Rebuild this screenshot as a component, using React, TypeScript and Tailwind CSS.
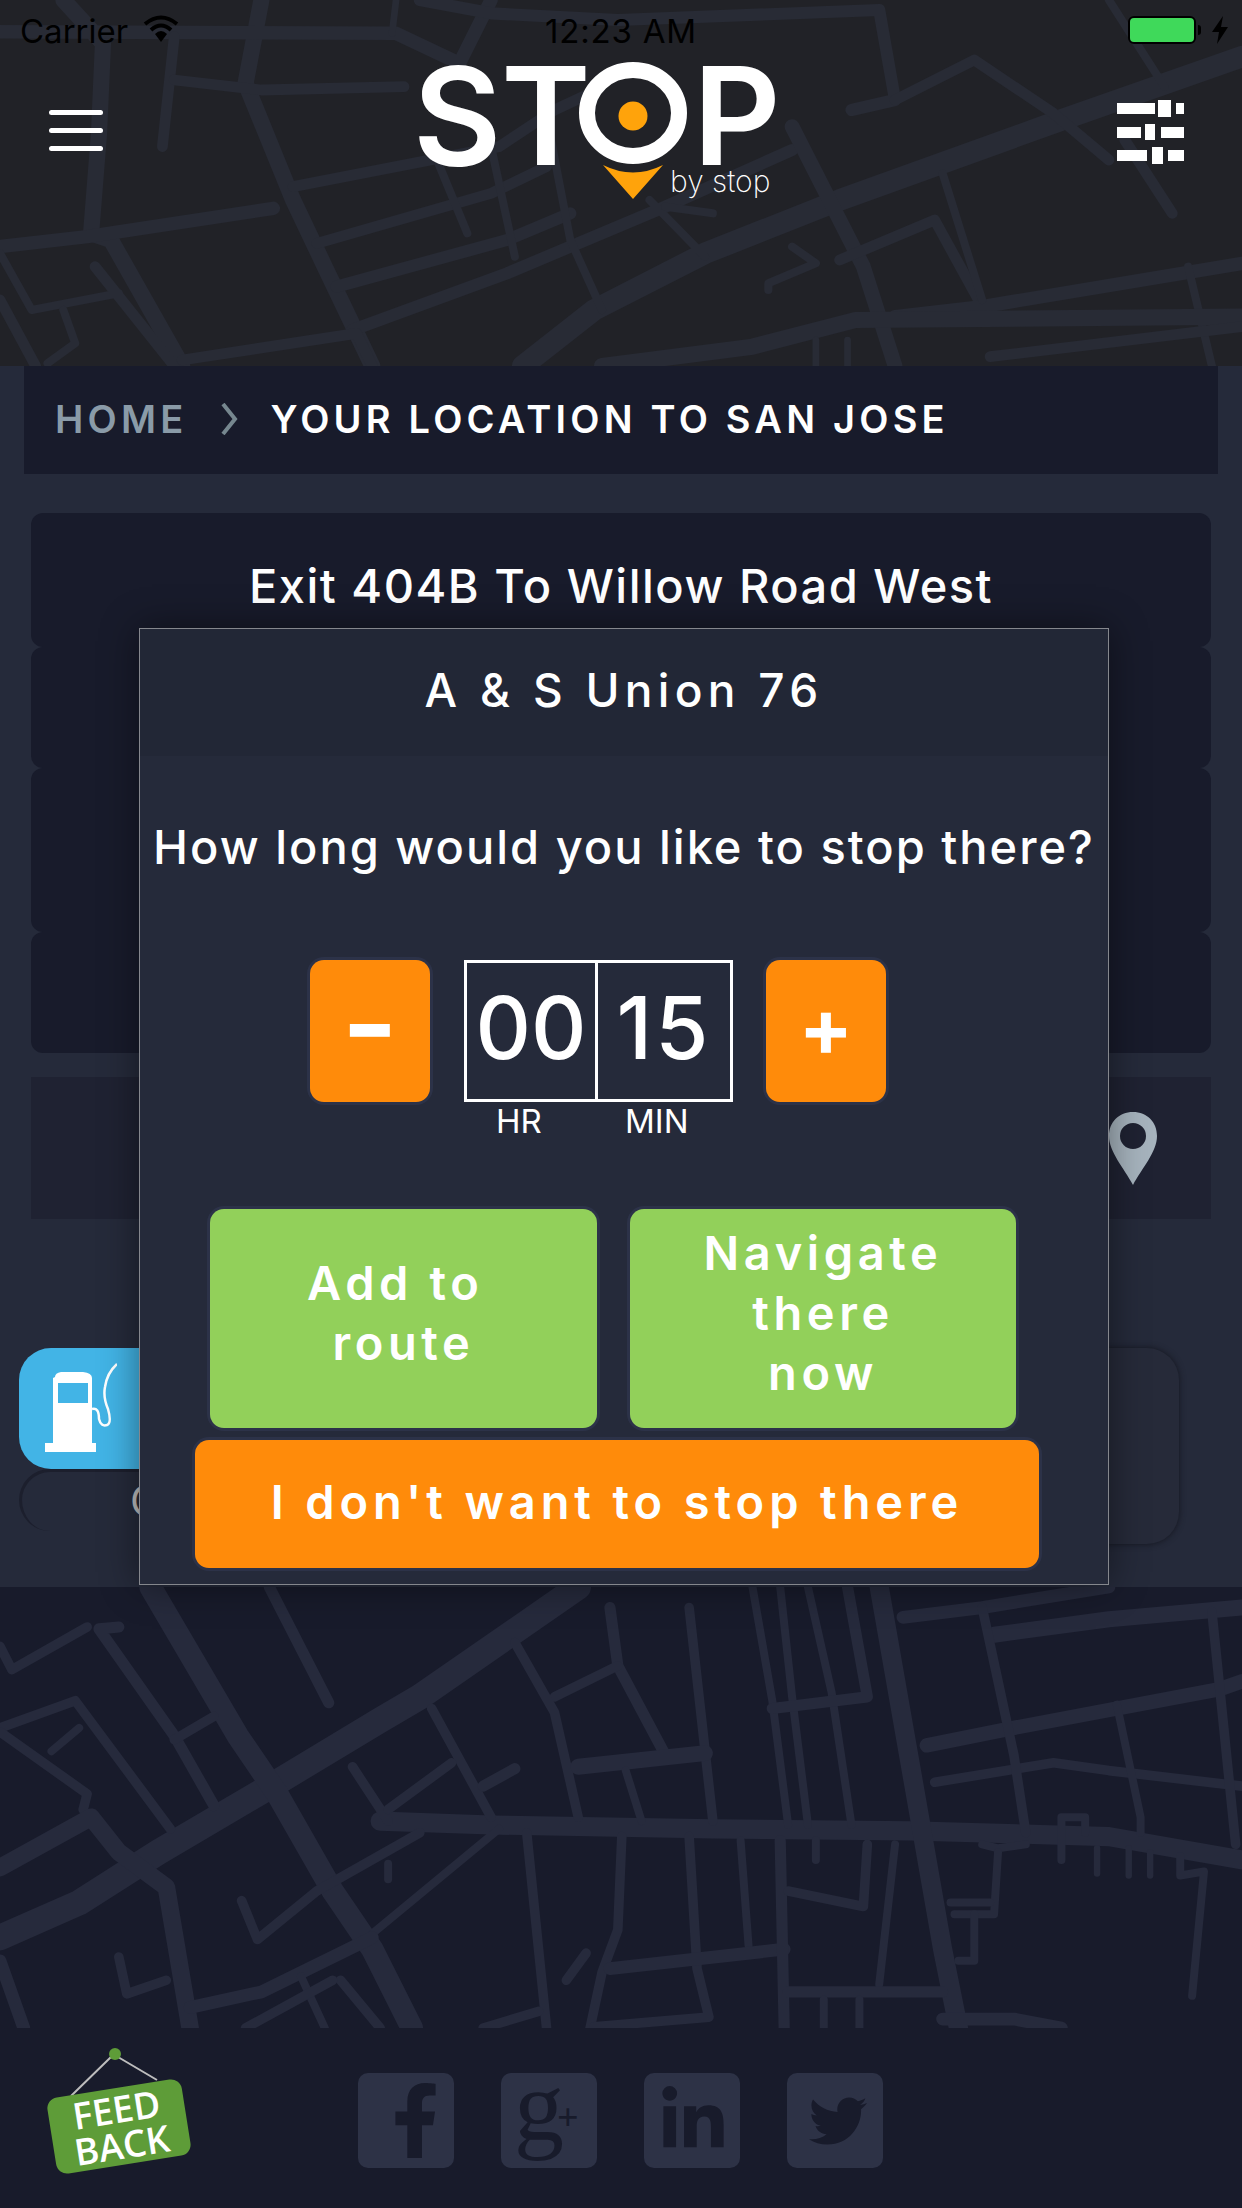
import { FaFacebookF, FaLinkedinIn, FaTwitter } from "react-icons/fa";

type Road = [number, string];

const upperRoads: Road[] = [
  [12, "80,0 130,130 125,400 115,700 140,720 230,1098"],
  [12, "330,0 310,250 370,600 410,800 470,1098"],
  [10, "0,740 110,710 345,625"],
  [10, "0,95 500,100 580,190 620,0"],
  [5, "500,0 495,100"],
  [8, "220,110 205,440"],
  [8, "220,240 330,270 510,260"],
  [9, "530,0 620,40 780,60 1110,30 1130,300 1075,330"],
  [16, "1568,170 1340,360 1060,600 890,760 750,930 660,1098"],
  [8, "370,560 630,440 700,330 790,230"],
  [8, "400,730 620,580 690,500"],
  [9, "425,860 640,720 720,640"],
  [9, "445,990 640,820 840,620 1000,450"],
  [6, "550,470 590,700"],
  [6, "620,440 650,770"],
  [6, "690,350 720,720 760,930"],
  [6, "820,600 890,770"],
  [11, "1000,380 1090,800 1130,1098"],
  [8, "1130,300 1230,180 1330,340 1400,480"],
  [6, "1400,0 1470,260"],
  [8, "1420,420 1480,640"],
  [8, "1060,780 1180,660 1240,920"],
  [10, "1568,790 1240,920 1130,950"],
  [6, "1190,520 1240,900"],
  [6, "1500,800 1530,1098"],
  [12, "760,1098 950,1040 1080,960 1568,950"],
  [8, "1250,1070 1568,980"],
  [6, "0,760 40,930 150,880"],
  [8, "0,900 45,1098"],
  [8, "120,800 220,1098"],
  [6, "80,930 95,1030 60,1090"],
  [8, "230,1080 450,1000 470,1098"],
  [6, "1000,740 1030,790 970,850 970,870"],
  [6, "840,620 900,640"],
  [5, "1030,1020 1030,1098"],
  [5, "1070,1020 1070,1098"],
];

const lowerRoads: Road[] = [
  [16, "730,-33 530,250 480,310 350,470 200,650 100,780 0,870"],
  [14, "190,-33 300,350 350,500 420,750 470,900 520,1103"],
  [12, "480,570 620,580 900,590 1150,595 1400,610 1568,670"],
  [12, "1110,-33 1160,550 1190,900 1210,1103"],
  [8, "1140,45 1240,20 1400,-33"],
  [10, "1255,90 1400,50 1568,20"],
  [9, "1170,375 1280,330 1540,230 1568,210"],
  [6, "1180,470 1330,420 1400,440 1568,480"],
  [6, "1240,20 1280,400 1295,600"],
  [6, "1530,30 1540,230 1560,630"],
  [5, "1410,270 1440,560 1440,600"],
  [6, "870,20 900,570"],
  [5, "950,-33 975,260 995,580"],
  [5, "985,-33 1000,250 1020,580"],
  [5, "1020,-33 1050,240 1075,580"],
  [7, "1070,-33 1095,250 975,280"],
  [7, "770,20 780,170 840,400"],
  [6, "780,170 700,250"],
  [6, "650,110 700,290 730,560"],
  [10, "730,430 890,395"],
  [5, "790,440 810,570"],
  [6, "445,430 490,570"],
  [6, "545,280 620,560"],
  [6, "570,420 490,540"],
  [7, "650,435 610,480"],
  [7, "340,-33 415,265"],
  [7, "150,70 125,75 220,350 270,530"],
  [6, "270,300 220,360"],
  [6, "110,70 15,180 0,120"],
  [6, "0,330 95,260 215,590"],
  [5, "100,330 65,390"],
  [6, "0,340 110,500 105,540"],
  [11, "0,690 115,560 150,650 210,740 240,1103"],
  [5, "630,590 470,860"],
  [6, "530,600 400,750 325,875 305,775"],
  [5, "490,680 490,720"],
  [6, "665,600 690,1103"],
  [6, "785,610 780,850 760,960 745,1103"],
  [6, "870,610 880,950 895,1075 750,1100"],
  [5, "935,620 945,890"],
  [8, "770,950 990,900"],
  [6, "740,910 715,980"],
  [7, "985,620 990,1103"],
  [6, "995,750 1090,790 1095,630"],
  [5, "1130,630 1110,990"],
  [7, "995,1010 1190,1010"],
  [5, "1040,1030 1040,1103"],
  [5, "1085,1030 1085,1103"],
  [5, "1030,620 1030,670"],
  [5, "1240,630 1260,640 1295,630"],
  [5, "1260,650 1255,810 1205,810"],
  [5, "1230,810 1230,930 1210,930"],
  [5, "1200,780 1250,780"],
  [5, "1340,670 1340,560 1370,560 1370,600"],
  [4, "1385,640 1385,705"],
  [4, "1425,640 1425,710"],
  [4, "1452,650 1452,710"],
  [5, "1490,660 1490,710 1520,700 1505,1020"],
  [8, "470,870 330,1010 240,1050"],
  [6, "150,920 160,1015 210,980"],
  [6, "430,980 480,1103"],
  [5, "380,970 410,1103"],
  [6, "310,1103 420,980"],
  [6, "680,1060 610,1103"],
  [8, "0,930 30,1103"],
  [8, "1190,1080 1280,1080 1340,1103"],
];

function RoadMap({ roads, viewBox, color, scale }: { roads: Road[]; viewBox: string; color: string; scale: number }) {
  return (
    <svg className="absolute inset-0 w-full h-full" viewBox={viewBox} preserveAspectRatio="none">
      {roads.map(([width, points], i) => (
        <polyline
          key={i}
          points={points}
          fill="none"
          stroke={color}
          strokeWidth={width * scale}
          strokeLinecap="round"
          strokeLinejoin="round"
          vectorEffect="non-scaling-stroke"
        />
      ))}
    </svg>
  );
}

function StatusBar() {
  return (
    <div className="relative grid grid-cols-3 h-[60px] pl-[20px] pr-[14px] items-start text-black text-[33px] leading-[62px]">
      <div className="flex items-center gap-[15px]">
        <span>Carrier</span>
        <svg width="36" height="27" viewBox="0 0 36 27" className="mt-[-6px]">
          <path d="M2 9 Q18 -4 34 9" fill="none" stroke="#000" strokeWidth="4" />
          <path d="M8 15 Q18 6 28 15" fill="none" stroke="#000" strokeWidth="4" />
          <path d="M12 19 Q18 13 24 19 L18 27 Z" fill="#000" />
        </svg>
      </div>
      <div className="text-center tracking-[0.8px] pr-[6px]">12:23 AM</div>
      <div className="flex justify-end items-center gap-[11px] pt-[16px]">
        <div className="flex items-center gap-[2px]">
          <div className="w-[68px] h-[28px] rounded-[6px] border-2 border-black bg-[#3fd95a]" />
          <div className="w-[3px] h-[10px] bg-black rounded-r-sm" />
        </div>
        <svg width="16" height="28" viewBox="0 0 16 28">
          <path d="M11 0 L0 16 H7 L5 28 L16 11 H9 Z" fill="#000" />
        </svg>
      </div>
    </div>
  );
}

function Logo() {
  return (
    <div className="relative flex w-[360px] h-[142px] text-white font-semibold text-[136px] leading-[112px]">
      <span className="-ml-[4px] w-[88px] text-center">S</span>
      <span className="w-[74px] text-center">T</span>
      <svg width="116" height="142" viewBox="0 0 116 142" className="shrink-0">
        <ellipse cx="58" cy="53" rx="46" ry="43" fill="#212227" stroke="#fff" strokeWidth="16" />
        <circle cx="58" cy="56" r="14.5" fill="#ffa30b" />
        <path d="M28 105 Q58 120 88 105 L58 139 Z" fill="#ffa30b" />
      </svg>
      <span className="ml-[2px] w-[84px] text-center">P</span>
      <span className="absolute left-[253px] top-[101px] text-[30px] leading-[40px] font-extralight text-white">
        by stop
      </span>
    </div>
  );
}

function Sliders() {
  return (
    <svg width="67" height="64" viewBox="0 0 67 64" fill="#fff">
      <rect x="0" y="3" width="38" height="11" />
      <rect x="41" y="0" width="13" height="17" />
      <rect x="59" y="3" width="8" height="11" />
      <rect x="0" y="27" width="24" height="11" />
      <rect x="28" y="24" width="10" height="16" />
      <rect x="44" y="27" width="23" height="11" />
      <rect x="0" y="50" width="30" height="11" />
      <rect x="35" y="47" width="11" height="17" />
      <rect x="51" y="50" width="16" height="11" />
    </svg>
  );
}

function Header() {
  return (
    <header className="relative h-[366px] bg-[#212227]">
      <RoadMap roads={upperRoads} viewBox="0 0 1568 1098" color="#282b35" scale={1.35} />
      <StatusBar />
      <div className="relative flex items-start pl-[49px]">
        <div className="mt-[50px] flex flex-col gap-[13px] w-[54px]">
          <div className="h-[5px] rounded-full bg-white" />
          <div className="h-[5px] rounded-full bg-white" />
          <div className="h-[5px] rounded-full bg-white" />
        </div>
        <div className="ml-[314px]">
          <Logo />
        </div>
        <div className="ml-[340px] mt-[40px]">
          <Sliders />
        </div>
      </div>
    </header>
  );
}

function Breadcrumb() {
  return (
    <div className="mx-[24px] h-[108px] bg-[#181b2b] flex items-center pl-[31px] pb-[2px] text-[38px] font-semibold tracking-[4.2px]">
      <span className="text-[#8a9ba8]">HOME</span>
      <svg width="18" height="32" viewBox="0 0 18 32" className="ml-[34px] mr-[31px]">
        <path d="M2 1 L14 16 L2 31" fill="none" stroke="#76878f" strokeWidth="4" />
      </svg>
      <span className="text-white">YOUR LOCATION TO SAN JOSE</span>
    </div>
  );
}

function RouteCards() {
  return (
    <div className="mt-[39px] mx-[31px] flex flex-col text-white">
      <div className="h-[134px] rounded-[12px] bg-[#181b2b] flex justify-center pt-[44px] text-[47px] leading-[58px] font-medium tracking-[1.5px]">
        Exit 404B To Willow Road West
      </div>
      <div className="h-[121px] rounded-[12px] bg-[#181b2b]" />
      <div className="h-[164px] rounded-[12px] bg-[#181b2b]" />
      <div className="h-[121px] rounded-[12px] bg-[#181b2b]" />
      <div className="mt-[24px] h-[142px] bg-[#1f2232] flex justify-end items-center pr-[54px]">
        <svg width="48" height="73" viewBox="0 0 48 73">
          <path
            fillRule="evenodd"
            fill="#a6b3bd"
            d="M24 0 C38 0 48 10 48 24 C48 40 33 56 24 73 C15 56 0 40 0 24 C0 10 10 0 24 0 Z M24 11 A13 13 0 1 0 24 37 A13 13 0 1 0 24 11 Z"
          />
        </svg>
      </div>
    </div>
  );
}

function FuelIcon() {
  return (
    <svg width="72" height="99" viewBox="0 -9 72 99">
      <path
        fill="#fff"
        fillRule="evenodd"
        d="M10 6 Q10 2 16 1 H38 Q47 2 47 7 V72 H51 V81 H0 V72 H8 V7 Z M13 12 V32 H43 V12 Z"
      />
      <path
        d="M47 38 Q54 36 54 48 Q56 56 62 54 Q67 52 63 38 Q58 26 60 16 Q62 2 72 -7"
        fill="none"
        stroke="#fff"
        strokeWidth="2.5"
      />
    </svg>
  );
}

function CategoryRow() {
  return (
    <div className="mt-[129px] ml-[19px] mr-[63px] flex justify-between">
      <div className="w-[300px]">
        <div className="h-[121px] rounded-[32px] bg-[#42b4e6] pl-[26px] pt-[14px]">
          <FuelIcon />
        </div>
        <div className="h-[62px] rounded-[32px] border-t-[3px] border-l-[3px] border-[#1c1f2d] pl-[108px] pt-[4px] text-[42px] leading-[50px] text-[#bdbdbd]">
          <span className="inline-block">G</span>
        </div>
      </div>
      <div className="relative w-[300px] h-[196px] rounded-[32px] bg-[#262a39] shadow-[0_0_6px_#14161f]">
        <svg width="40" height="100" viewBox="0 0 40 100" className="absolute left-[195px] top-[52px]">
          <path d="M0 6 Q12 16 14 38" fill="none" stroke="#6fa832" strokeWidth="4" />
          <path d="M0 56 L8 66 L0 78" fill="none" stroke="#6fa832" strokeWidth="4" />
        </svg>
      </div>
    </div>
  );
}

function StopModal() {
  return (
    <div className="absolute left-[139px] top-[628px] w-[970px] h-[957px] border border-[#85878d] bg-[#252a3a] text-white shadow-[0_0_36px_rgba(0,0,0,0.45)]">
      <div className="h-[127px] bg-[#222736] flex items-center justify-center pb-[5px] text-[46px] font-medium tracking-[5.3px]">
        A &amp; S Union 76
      </div>
      <div className="h-[204px] pt-[61px] text-center text-[47px] leading-[60px] font-medium tracking-[2px] whitespace-nowrap">
        How long would you like to stop there?
      </div>
      <div className="pl-[170px] flex items-start">
        <button className="w-[120px] h-[142px] rounded-[14px] bg-[#ff8b0a] shadow-[0_0_0_3px_#2c3248] text-[122px] font-semibold leading-[120px] pb-[16px]">
          -
        </button>
        <div className="ml-[34px] w-[269px]">
          <div className="flex h-[142px] border-[3px] border-white text-[86px] leading-[130px] font-medium text-center">
            <div className="w-[131px] border-r-[3px] border-white">00</div>
            <div className="flex-1 tracking-[3px]">15</div>
          </div>
          <div className="flex text-[33px] leading-[36px] mt-[1px]">
            <span className="ml-[32px] w-[129px]">HR</span>
            <span>MIN</span>
          </div>
        </div>
        <button className="ml-[33px] w-[120px] h-[142px] rounded-[14px] bg-[#ff8b0a] shadow-[0_0_0_3px_#2c3248] text-[80px] font-bold leading-[130px] pb-[8px]">
          +
        </button>
      </div>
      <div className="mt-[70px] ml-[70px] flex gap-[33px] text-[47px] leading-[60px] font-semibold tracking-[4.6px] text-center">
        <button className="w-[387px] h-[219px] rounded-[14px] bg-[#92d05a] shadow-[0_0_0_3px_#2c3248] pb-[12px]">
          Add to&nbsp;
          <br />
          route
        </button>
        <button className="w-[386px] h-[219px] rounded-[14px] bg-[#92d05a] shadow-[0_0_0_3px_#2c3248] pb-[12px]">
          Navigate
          <br />
          there
          <br />
          now
        </button>
      </div>
      <button className="block mt-[12px] ml-[55px] w-[844px] h-[128px] rounded-[14px] bg-[#ff8b0a] shadow-[0_0_0_3px_#2c3248] pb-[4px] text-[47px] font-semibold tracking-[4.9px]">
        I don't want to stop there
      </button>
    </div>
  );
}

function FeedbackSign() {
  return (
    <div className="relative w-[200px] h-[178px]">
      <svg width="200" height="178" viewBox="0 0 200 178" className="absolute left-0 top-[2px]">
        <path d="M112 26 L71 66 M118 27 L157 50" stroke="#bdbdbd" strokeWidth="2" fill="none" />
        <circle cx="115" cy="24" r="6" fill="#5e9c38" />
      </svg>
      <div className="absolute left-[51px] top-[60px] w-[136px] h-[77px] -rotate-[9deg] rounded-[11px] bg-[#5e9c38] text-white text-[37px] leading-[36px] font-semibold text-center pt-[3px] font-['Open_Sans',sans-serif]">
        FEED
        <br />
        BACK
      </div>
    </div>
  );
}

function Footer() {
  const tile = "relative w-[96px] h-[95px] rounded-[10px] bg-[#2d3246] overflow-hidden flex text-[#181b2b]";
  return (
    <footer className="relative h-[180px] bg-[#181b2b] flex">
      <FeedbackSign />
      <div className="ml-[158px] mt-[45px] flex gap-[47px]">
        <div className={`${tile} justify-end pr-[1px] pt-[10px]`}>
          <FaFacebookF size={75} />
        </div>
        <div className={`${tile} font-['Liberation_Serif',serif]`}>
          <span className="absolute left-[13px] top-[-6px] text-[100px] leading-[80px]">g</span>
          <span className="absolute left-[56px] top-[24px] text-[38px] leading-[40px] font-bold">+</span>
        </div>
        <div className={`${tile} items-center justify-center pl-[1px]`}>
          <FaLinkedinIn size={70} />
        </div>
        <div className={`${tile} items-center justify-center pl-[6px]`}>
          <FaTwitter size={58} />
        </div>
      </div>
    </footer>
  );
}

export default function App() {
  return (
    <div className="relative w-[1242px] h-[2208px] overflow-hidden bg-[#252a3a] font-[Inter,sans-serif]">
      <Header />
      <main className="h-[1221px] bg-[#252a3a]">
        <Breadcrumb />
        <RouteCards />
        <CategoryRow />
      </main>
      <div className="relative h-[441px] bg-[#181b2b]">
        <RoadMap roads={lowerRoads} viewBox="0 -33 1568 1136" color="#262a3c" scale={1.6} />
      </div>
      <Footer />
      <StopModal />
    </div>
  );
}
